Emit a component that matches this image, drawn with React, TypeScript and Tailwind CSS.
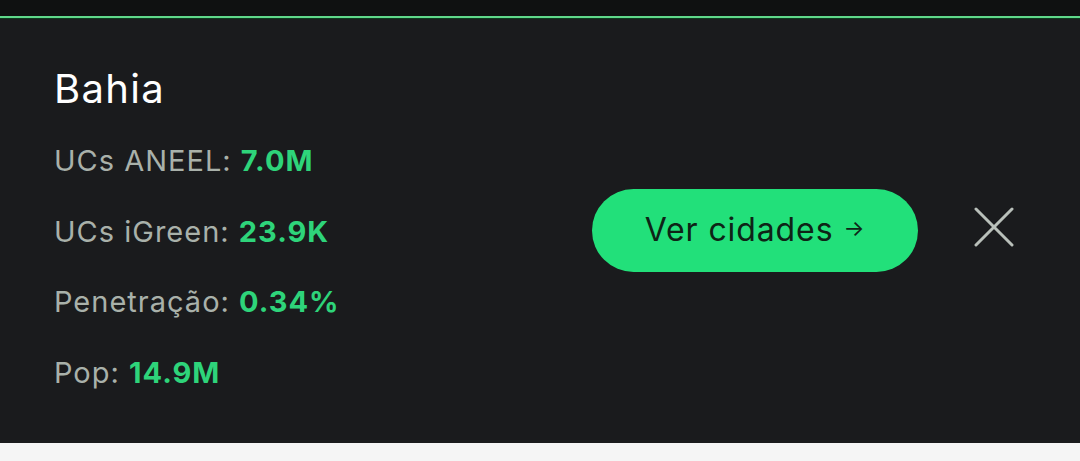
import React from "react";

const stats = [
    { label: "UCs ANEEL:", value: "7.0M" },
    { label: "UCs iGreen:", value: "23.9K" },
    { label: "Penetração:", value: "0.34%" },
    { label: "Pop:", value: "14.9M" },
];

export default function App() {
    return (
        <div
            className="w-[1080px] h-[461px] flex flex-col bg-[#f5f5f5] overflow-hidden"
            style={{ fontFamily: "Inter, 'Noto Sans', sans-serif" }}
        >
            <div className="h-[16px] bg-[#0f1111]"></div>
            <div className="h-[2px] bg-[#5fd88a]"></div>
            <div className="h-[1px] bg-[#0b3a1e]"></div>

            <div className="h-[424px] bg-[#1a1b1d] flex items-center pl-[54px] pr-[66px]">
                <div className="flex-1 flex flex-col self-start pt-[50px]">
                    <h2 className="text-[40px] leading-none text-white font-normal tracking-[1.3px]">
                        Bahia
                    </h2>
                    <div className="flex flex-col gap-[40.7px] mt-[37px]">
                        {stats.map((s) => (
                            <div
                                key={s.label}
                                className="text-[29px] leading-[30px] text-[#a9b1aa] whitespace-nowrap tracking-[1px]"
                            >
                                {s.label}{" "}
                                <span className="font-bold text-[#2ed47a]">{s.value}</span>
                            </div>
                        ))}
                    </div>
                </div>

                <button className="w-[326px] h-[83px] rounded-full bg-[#22e07a] text-[#0e2416] text-[32px] tracking-[0.9px] flex items-center justify-center gap-[10px] mt-[-2px]">
                    <span>Ver cidades</span>
                    <span className="text-[22px] mt-[-4px]">→</span>
                </button>

                <button className="ml-[56px] w-[40px] h-[40px] flex items-center justify-center text-[#b9c0ba] mt-[-8px]">
                    <svg width="40" height="40" viewBox="0 0 40 40" fill="none">
                        <path d="M2 2L38 38M38 2L2 38" stroke="currentColor" strokeWidth="3" strokeLinecap="round" />
                    </svg>
                </button>
            </div>
        </div>
    );
}
